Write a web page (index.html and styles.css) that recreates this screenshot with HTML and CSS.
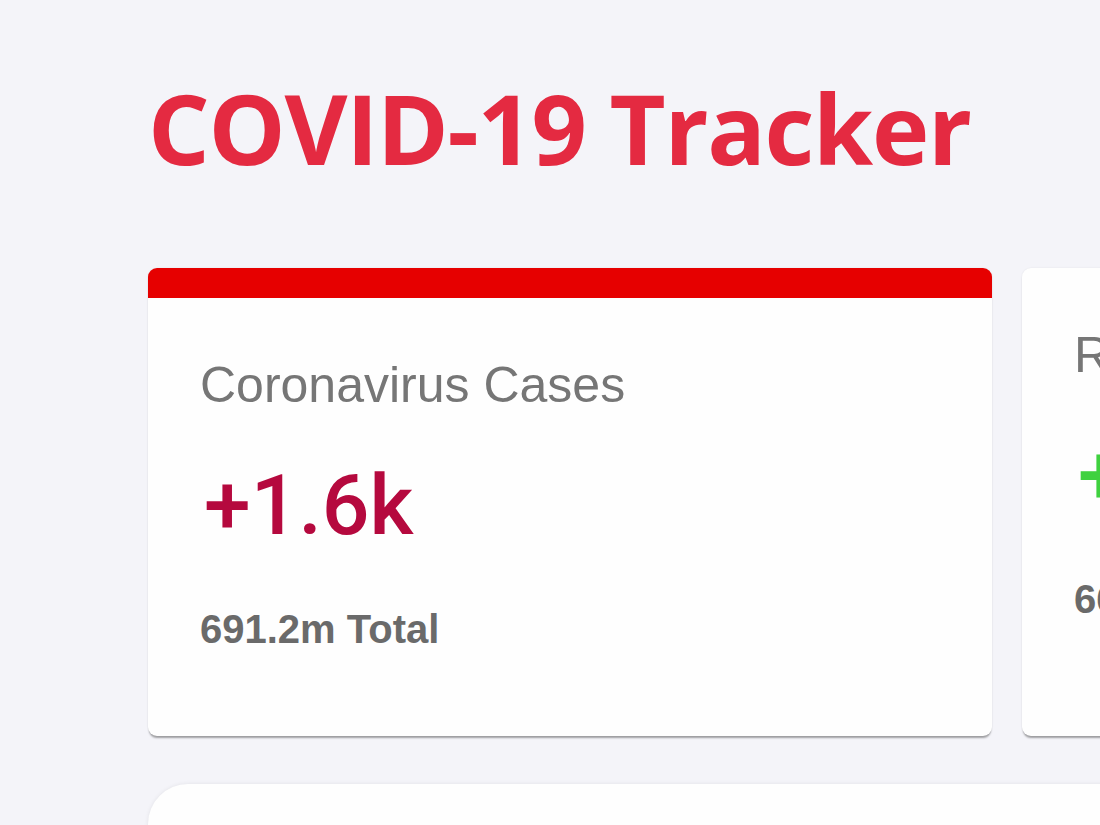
FILE: index.html
```html
<!DOCTYPE html>
<html>
<head>
<meta charset="utf-8">
<link rel="stylesheet" href="styles.css">
</head>
<body>
<div class="page">
  <h1 class="title">COVID-19 Tracker</h1>
  <div class="cards">
    <div class="card card-cases">
      <div class="card-body">
        <div class="card-label">Coronavirus Cases</div>
        <div class="card-value cases">+1.6k</div>
        <div class="card-total">691.2m Total</div>
      </div>
    </div>
    <div class="card card-recovered">
      <div class="card-body">
        <div class="card-label">Recovered</div>
        <div class="card-value recovered">+0</div>
        <div class="card-total">665.4m Total</div>
      </div>
    </div>
  </div>
  <div class="panel"></div>
</div>
</body>
</html>
```
FILE: styles.css
```css
html, body {
  margin: 0;
  padding: 0;
  background: #f4f4f9;
  overflow: hidden;
}
.page {
  width: 1100px;
  height: 825px;
  padding-left: 148px;
  box-sizing: border-box;
  overflow: hidden;
}
.title {
  margin: 0;
  padding-top: 74px;
  height: 196px;
  box-sizing: border-box;
  font-family: "Open Sans", "Noto Sans", sans-serif;
  font-weight: 700;
  font-size: 97px;
  line-height: 106px;
  color: #e42a41;
  letter-spacing: -1.3px;
  white-space: nowrap;
}
.cards {
  display: flex;
  gap: 30px;
  margin-top: 72px;
}
.card {
  flex: 0 0 844px;
  height: 468px;
  box-sizing: border-box;
  background: #fefefe;
  border-radius: 9px;
  box-shadow: 0 3px 2px -1px rgba(0,0,0,0.35), 0 0 2px rgba(0,0,0,0.08);
  overflow: hidden;
}
.card-cases {
  border-top: 30px solid #e60000;
}
.card-body {
  padding: 59px 0 0 52px;
  font-family: "Liberation Sans", Arial, sans-serif;
}
.card-label {
  font-size: 50px;
  line-height: 56px;
  color: #767676;
}
.card-value {
  margin-top: 48px;
  padding-left: 4px;
  font-family: Roboto, "Liberation Sans", sans-serif;
  font-weight: 500;
  font-size: 84px;
  line-height: 90px;
  color: #b5093e;
}
.card-value.recovered {
  color: #3fd13f;
}
.card-total {
  margin-top: 55px;
  font-size: 40px;
  line-height: 46px;
  font-weight: 700;
  color: #6a6a6a;
}
.panel {
  margin-top: 48px;
  width: 1100px;
  height: 200px;
  background: #fefefe;
  border-radius: 40px 0 0 0;
  box-shadow: 0 0 4px rgba(0,0,0,0.08);
}
```
